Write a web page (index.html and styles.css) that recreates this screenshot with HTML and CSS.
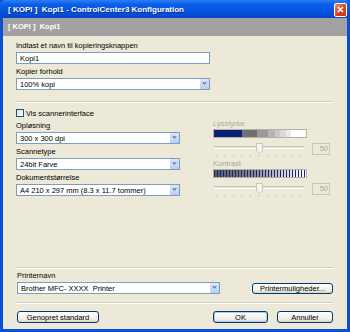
FILE: index.html
```html
<!DOCTYPE html>
<html>
<head>
    <title>Kopi1 - ControlCenter3 Konfiguration</title>
    <link rel="stylesheet" href="styles.css">
</head>
<body>
    <div class="window">
        <div class="titlebar">
            <span class="title">[ KOPI ]&nbsp; Kopi1 - ControlCenter3 Konfiguration</span>
            <span class="close">
                <svg width="7" height="7" viewBox="0 0 7 7"><path d="M1 1L6 6M6 1L1 6" stroke="#fff" stroke-width="1.6"/></svg>
            </span>
        </div>
        <div class="frame">
            <div class="tabhead">[ KOPI ]&nbsp; Kopi1</div>
            <div class="content">
                <div class="field wide">
                    <label>Indtast et navn til kopieringsknappen</label>
                    <input type="text" class="textbox" value="Kopi1">
                </div>
                <div class="field wide">
                    <label>Kopier forhold</label>
                    <div class="combo"><span>100% kopi</span><span class="drop"></span></div>
                </div>

                <div class="sep"></div>

                <div class="check-row">
                    <span class="checkbox"></span>
                    <span>Vis scannerinterface</span>
                </div>

                <div class="scan">
                    <div class="scan-left">
                        <div class="field">
                            <label>Opløsning</label>
                            <div class="combo"><span>300 x 300 dpi</span><span class="drop"></span></div>
                        </div>
                        <div class="field">
                            <label>Scannetype</label>
                            <div class="combo"><span>24bit Farve</span><span class="drop"></span></div>
                        </div>
                        <div class="field">
                            <label>Dokumentstørrelse</label>
                            <div class="combo"><span>A4 210 x 297 mm (8.3 x 11.7 tommer)</span><span class="drop"></span></div>
                        </div>
                    </div>
                    <div class="scan-right">
                        <label class="dim">Lysstyrke</label>
                        <div class="bar bright"></div>
                        <div class="slider-row">
                            <div class="slider">
                                <div class="track"></div>
                                <svg class="thumb" width="7" height="11" viewBox="0 0 7 11"><path d="M0.5 0.5H6.5V7.5L3.5 10.5L0.5 7.5Z" fill="#f4f3ee" stroke="#c6c3b5"/></svg>
                                <div class="ticks"><i></i><i></i><i></i><i></i><i></i><i></i><i></i><i></i><i></i><i></i><i></i></div>
                            </div>
                            <div class="value">50</div>
                        </div>
                        <label class="dim">Kontrast</label>
                        <div class="bar contrast"></div>
                        <div class="slider-row">
                            <div class="slider">
                                <div class="track"></div>
                                <svg class="thumb" width="7" height="11" viewBox="0 0 7 11"><path d="M0.5 0.5H6.5V7.5L3.5 10.5L0.5 7.5Z" fill="#f4f3ee" stroke="#c6c3b5"/></svg>
                                <div class="ticks"><i></i><i></i><i></i><i></i><i></i><i></i><i></i><i></i><i></i><i></i><i></i></div>
                            </div>
                            <div class="value">50</div>
                        </div>
                    </div>
                </div>

                <div class="spacer"></div>

                <div class="sep"></div>

                <div class="printer">
                    <div class="field printer-field">
                        <label>Printernavn</label>
                        <div class="combo"><span>Brother MFC-&nbsp;XXXX&nbsp; Printer</span><span class="drop"></span></div>
                    </div>
                    <button class="btn btn-options">Printermuligheder...</button>
                </div>

                <div class="sep sep-low"></div>

                <div class="actions">
                    <button class="btn btn-reset">Genopret standard</button>
                    <div class="actions-right">
                        <button class="btn btn-ok">OK</button>
                        <button class="btn btn-cancel">Annuller</button>
                    </div>
                </div>
            </div>
        </div>
    </div>
</body>
</html>
```

FILE: styles.css
```css
body {
    margin: 0;
    font-family: Tahoma, 'Liberation Sans', Arial, sans-serif;
    font-size: 7.5px;
    color: #000;
    background-color: #ECE9D8;
}

.window {
    width: 350px;
    height: 332px;
    display: flex;
    flex-direction: column;
    background-color: #0A4FD8;
}

.titlebar {
    height: 18px;
    display: flex;
    align-items: center;
    justify-content: space-between;
    padding: 0 3px 0 8px;
    background: linear-gradient(#2F7EF5 0%, #0A5FEA 25%, #0450DC 70%, #0747C8 100%);
    border-radius: 5px 5px 0 0;
}

.title {
    color: #fff;
    font-weight: bold;
    font-size: 8px;
    white-space: pre;
    text-shadow: 1px 1px 0 #0A2A8A;
}

.close {
    width: 11px;
    height: 12px;
    margin-top: 1px;
    display: flex;
    align-items: center;
    justify-content: center;
    background: linear-gradient(135deg, #F08A6C, #D6411F 60%, #C4361A);
    border: 1px solid #fff;
    border-radius: 2px;
}

.frame {
    flex: 1;
    display: flex;
    flex-direction: column;
    margin: 0 3px 3px 3px;
    background-color: #ECE9D8;
}

.tabhead {
    height: 18px;
    line-height: 17px;
    padding-left: 5px;
    background-color: #A2A2A2;
    color: #fff;
    font-weight: bold;
    font-size: 7.5px;
    white-space: pre;
}

.content {
    flex: 1;
    display: flex;
    flex-direction: column;
    padding: 2px 14px 6px 13px;
}

.field {
    display: flex;
    flex-direction: column;
    margin-top: 3px;
}

.field label {
    height: 10px;
    line-height: 10px;
    margin-bottom: 1px;
}

.field.wide {
    width: 194px;
}

.textbox {
    height: 12px;
    box-sizing: border-box;
    border: 1px solid #7F9DB9;
    background-color: #fff;
    font-family: inherit;
    font-size: 7.5px;
    padding: 0 3px;
    margin: 0;
    outline: none;
}

.combo {
    height: 12px;
    box-sizing: border-box;
    border: 1px solid #7F9DB9;
    background-color: #fff;
    display: flex;
    align-items: center;
    justify-content: space-between;
    padding-left: 3px;
    white-space: pre;
}

.drop {
    width: 9px;
    height: 10px;
    background: linear-gradient(#DCE6FB, #B9CDF6);
    border-left: 1px solid #fff;
    position: relative;
}

.drop::after {
    content: "";
    position: absolute;
    left: 3px;
    top: 2px;
    width: 2px;
    height: 2px;
    border-right: 1px solid #4D6185;
    border-bottom: 1px solid #4D6185;
    transform: rotate(45deg);
}

.sep {
    height: 1px;
    background-color: #D0CDBF;
    border-bottom: 1px solid #fff;
    margin-top: 11px;
}

.check-row {
    display: flex;
    align-items: center;
    gap: 2px;
    height: 10px;
    margin-top: 5px;
}

.checkbox {
    width: 6px;
    height: 6px;
    border: 1px solid #1C5180;
    background: linear-gradient(135deg, #DCDCD7, #fff);
}

.scan {
    display: flex;
    gap: 33px;
}

.scan-left {
    width: 164px;
    display: flex;
    flex-direction: column;
}

.scan-right {
    width: 117px;
    display: flex;
    flex-direction: column;
    padding-top: 1px;
}

.dim {
    color: #ACA899;
    height: 10px;
    line-height: 10px;
}

.bar {
    width: 92px;
    height: 7px;
    border: 1px solid #B5B2A4;
}

.bright {
    background: linear-gradient(90deg,
        #0B1E78 0 30%, #707070 30% 47%, #9A9A9A 47% 59%,
        #B6B6B6 59% 66%, #C9C9C9 66% 72%, #D9D9DC 72% 78%,
        #E9E9F0 78% 84%, #fff 84% 100%);
}

.contrast {
    background:
        repeating-linear-gradient(90deg, #16247A 0 1px, transparent 1px 3px),
        linear-gradient(90deg, #5A5A5A, #8A8A8A 45%, #D0D0D8 75%, #fff);
}

.slider-row {
    display: flex;
    align-items: flex-start;
    gap: 8px;
    margin-top: 5px;
    height: 16px;
}

.slider {
    width: 94px;
    height: 16px;
    position: relative;
}

.track {
    position: absolute;
    left: 1px;
    right: 0;
    top: 3px;
    height: 1px;
    border-top: 1px solid #C9C6B8;
    border-bottom: 1px solid #fff;
    background-color: #E2DFD2;
}

.thumb {
    position: absolute;
    left: 43px;
    top: 0;
}

.ticks {
    position: absolute;
    left: 3px;
    right: 3px;
    top: 12px;
    display: flex;
    justify-content: space-between;
}

.ticks i {
    width: 1px;
    height: 1px;
    background-color: #B5B2A4;
}

.value {
    width: 15px;
    height: 10px;
    line-height: 10px;
    border: 1px solid #C9C7BA;
    color: #ACA899;
    text-align: right;
    padding-right: 1px;
}

.spacer {
    flex: 1;
}

.printer {
    display: flex;
    align-items: flex-end;
    justify-content: space-between;
    padding-left: 1px;
}

.printer-field {
    width: 203px;
    margin-top: 2px;
}

.btn {
    font-family: inherit;
    font-size: 7.5px;
    color: #000;
    height: 12px;
    padding: 0;
    border: 1px solid #003C74;
    border-radius: 3px;
    background: linear-gradient(#FFFFFF, #F1EFE6 70%, #D8D2C3);
}

.btn-options {
    width: 81px;
    height: 11px;
    margin-right: 0;
}

.sep-low {
    margin-top: 8px;
}

.actions {
    display: flex;
    justify-content: space-between;
    margin-top: 7px;
    padding-left: 1px;
}

.actions-right {
    display: flex;
    gap: 9px;
}

.btn-reset {
    width: 82px;
}

.btn-ok {
    width: 55px;
    box-shadow: inset 0 0 0 1px #B4C8F5;
}

.btn-cancel {
    width: 56px;
}
```
